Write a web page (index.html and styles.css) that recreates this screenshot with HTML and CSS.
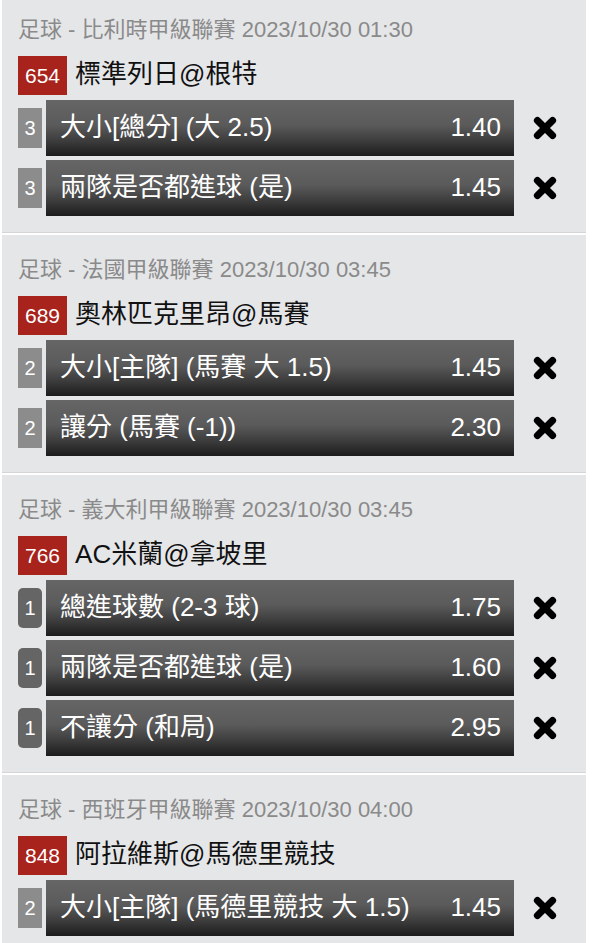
FILE: index.html
```html
<!DOCTYPE html>
<html>
	<head>
		<meta charset="UTF-8">
		<title>投注單</title>
		<link rel="stylesheet" href="styles.css">
	</head>
	<body>
		<!--投注列表-->
		<div class="list">
			<!--第一場-->
			<div class="match">
				<div class="league">足球 - 比利時甲級聯賽 2023/10/30 01:30</div>
				<div class="teams"><span class="code">654</span><span class="name">標準列日@根特</span></div>
				<div class="bet">
					<span class="tag">3</span>
					<div class="bar"><span>大小[總分] (大 2.5)</span><span class="odds">1.40</span></div>
					<a class="del" href="javascript:;"><svg viewBox="0 0 24 24"><path d="M5 5L19 19M19 5L5 19"/></svg></a>
				</div>
				<div class="bet">
					<span class="tag">3</span>
					<div class="bar"><span>兩隊是否都進球 (是)</span><span class="odds">1.45</span></div>
					<a class="del" href="javascript:;"><svg viewBox="0 0 24 24"><path d="M5 5L19 19M19 5L5 19"/></svg></a>
				</div>
			</div>
			<!--第二場-->
			<div class="match">
				<div class="league">足球 - 法國甲級聯賽 2023/10/30 03:45</div>
				<div class="teams"><span class="code">689</span><span class="name">奧林匹克里昂@馬賽</span></div>
				<div class="bet">
					<span class="tag">2</span>
					<div class="bar"><span>大小[主隊] (馬賽 大 1.5)</span><span class="odds">1.45</span></div>
					<a class="del" href="javascript:;"><svg viewBox="0 0 24 24"><path d="M5 5L19 19M19 5L5 19"/></svg></a>
				</div>
				<div class="bet">
					<span class="tag">2</span>
					<div class="bar"><span>讓分 (馬賽 (-1))</span><span class="odds">2.30</span></div>
					<a class="del" href="javascript:;"><svg viewBox="0 0 24 24"><path d="M5 5L19 19M19 5L5 19"/></svg></a>
				</div>
			</div>
			<!--第三場-->
			<div class="match">
				<div class="league">足球 - 義大利甲級聯賽 2023/10/30 03:45</div>
				<div class="teams"><span class="code">766</span><span class="name">AC米蘭@拿坡里</span></div>
				<div class="bet">
					<span class="tag round">1</span>
					<div class="bar"><span>總進球數 (2-3 球)</span><span class="odds">1.75</span></div>
					<a class="del" href="javascript:;"><svg viewBox="0 0 24 24"><path d="M5 5L19 19M19 5L5 19"/></svg></a>
				</div>
				<div class="bet">
					<span class="tag round">1</span>
					<div class="bar"><span>兩隊是否都進球 (是)</span><span class="odds">1.60</span></div>
					<a class="del" href="javascript:;"><svg viewBox="0 0 24 24"><path d="M5 5L19 19M19 5L5 19"/></svg></a>
				</div>
				<div class="bet">
					<span class="tag round">1</span>
					<div class="bar"><span>不讓分 (和局)</span><span class="odds">2.95</span></div>
					<a class="del" href="javascript:;"><svg viewBox="0 0 24 24"><path d="M5 5L19 19M19 5L5 19"/></svg></a>
				</div>
			</div>
			<!--第四場-->
			<div class="match">
				<div class="league">足球 - 西班牙甲級聯賽 2023/10/30 04:00</div>
				<div class="teams"><span class="code">848</span><span class="name">阿拉維斯@馬德里競技</span></div>
				<div class="bet">
					<span class="tag">2</span>
					<div class="bar"><span>大小[主隊] (馬德里競技 大 1.5)</span><span class="odds">1.45</span></div>
					<a class="del" href="javascript:;"><svg viewBox="0 0 24 24"><path d="M5 5L19 19M19 5L5 19"/></svg></a>
				</div>
			</div>
		</div>
	</body>
</html>
```

FILE: styles.css
```css
*{
	margin: 0;
	padding: 0;
}
body{
	background-color: #fff;
	font-family: "Liberation Sans", "Noto Sans CJK TC", sans-serif;
}
/*页面往上滚了一点*/
.list{
	margin-top: -5px;
}
.match{
	margin: 0 8px 2px 2px;
	padding: 21px 10px 16px 16px;
	background-color: #e5e6e8;
	border-bottom: 1px solid #d4d5d7;
}
.league{
	font-size: 22px;
	line-height: 28px;
	color: #8a8a8a;
	white-space: nowrap;
}
.teams{
	display: flex;
	align-items: center;
	margin-top: 12px;
	height: 39px;
}
.code{
	height: 39px;
	line-height: 39px;
	padding: 0 7px;
	margin-right: 8px;
	background-color: #a8231c;
	color: #fff;
	font-size: 21px;
}
.name{
	font-size: 26px;
	line-height: 1;
	color: #111;
	/*文字略偏上*/
	margin-bottom: 4px;
}
.bet{
	display: flex;
	height: 56px;
	margin-top: 5px;
}
.bet + .bet{
	margin-top: 4px;
}
.tag{
	width: 24px;
	height: 40px;
	margin-top: 8px;
	margin-right: 4px;
	line-height: 40px;
	text-align: center;
	background-color: #8c8c8c;
	color: #fff;
	font-size: 20px;
}
/*第三场的圆角标签*/
.tag.round{
	background-color: #656565;
	border-radius: 5px;
}
.bar{
	flex: 1;
	display: flex;
	align-items: center;
	justify-content: space-between;
	padding: 0 13px 2px 14px;
	background: linear-gradient(#666 0%, #5a5a5a 45%, #3a3a3a 75%, #1c1c1c 100%);
	color: #fff;
	font-size: 26px;
	line-height: 1;
	white-space: nowrap;
}
.del{
	display: flex;
	align-items: center;
	justify-content: center;
	width: 62px;
}
.del svg{
	width: 26px;
	height: 26px;
}
.del path{
	stroke: #000;
	stroke-width: 6.5;
	stroke-linecap: round;
	fill: none;
}
```
